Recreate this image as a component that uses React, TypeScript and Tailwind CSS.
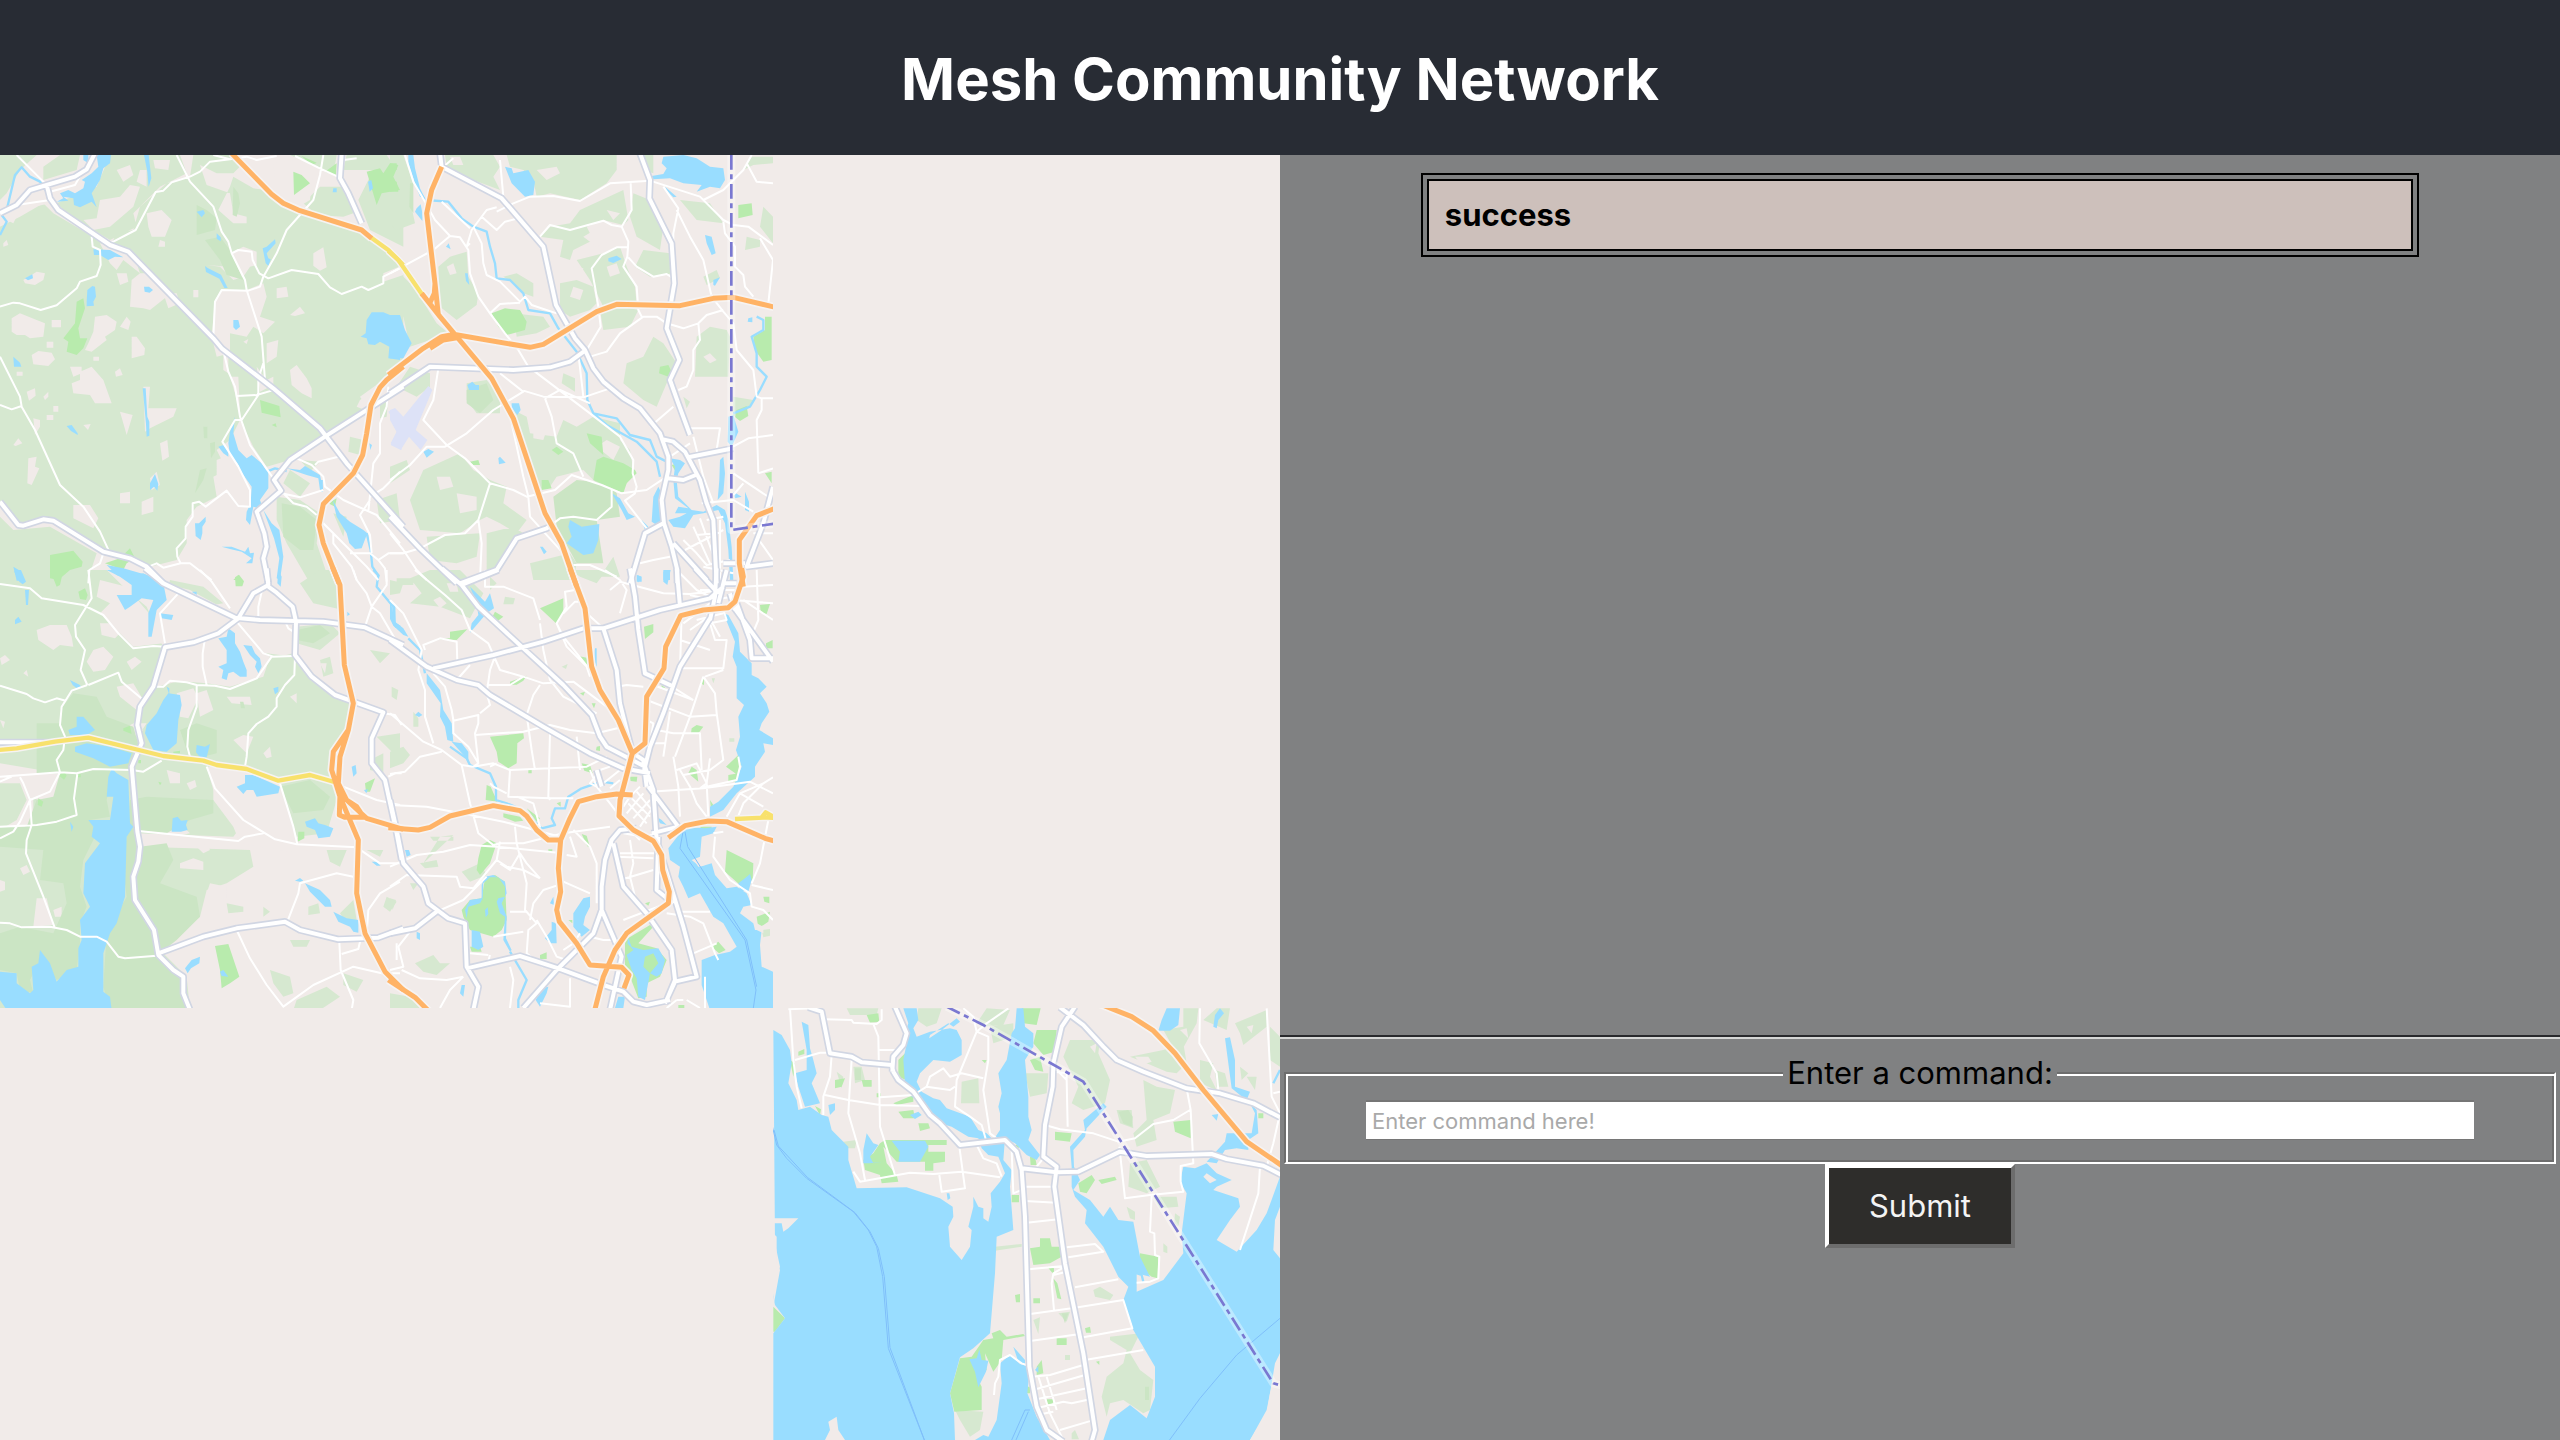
import { useState } from "react";

type Sheet = {
  at: string;
  woods: string;
  clearings: string;
  deepWoods: string;
  parks: string;
  water: string;
  islands?: string;
  streams: string;
  minor: string;
  major: string;
  highway: string;
  toll?: string;
  ferry?: string;
  border?: string;
  airport?: string;
};

/* Every sheet is drawn at three units per pixel. */
const northWest: Sheet = {
  at: "translate(0 150) scale(0.33333)",
  woods:
    "M0 15H110L60 60 20 130 0 150ZM0 230L60 200 130 160 160 190 330 290 350 250 400 240 420 170 500 100 570 80 580 15H700L830 150 900 190 1090 240 1210 330V640L1150 690 1080 740 1100 770 1000 840 970 860 870 930 800 950 760 890 720 810 690 870 650 900 680 960 640 980 650 1040 590 1070 560 1110 560 1180 530 1230 450 1250 300 1200 150 1110 50 1130 0 1050ZM180 15H240L230 60 130 90 130 50ZM330 15H540L560 70 480 110 400 190 410 230 330 270 280 240 200 190 170 160 240 130 290 110ZM0 1100L40 1140 150 1130 290 1210 260 1300H0ZM830 1040L900 1050 960 1090 950 1180 990 1300H930L860 1180 830 1110ZM1050 860L1090 870 1080 915 1045 905ZM1040 15H1160L1210 90V290L1110 240 1075 150 1120 60 1030 60ZM870 15H1010L1000 75 940 45ZM960 110L1040 110 1060 190 1030 200 950 195 910 160ZM1000 1090L1040 1100 1030 1160ZM870 960L930 1000 900 1040 850 1000ZM1130 1050l60 -20 10 80 -60 10ZM900 930l60 5 -30 30ZM1140 760l25 -20 -5 60 -20 5ZM740 830L850 770 950 850 860 920 790 930Z",
  clearings:
    "M600 45L650 70 700 70 745 25 790 60 800 120 760 115 700 80 690 110 655 180 700 220 740 220 740 200 700 190 690 130 620 105ZM820 40L880 30 940 60 930 150 880 180 830 130ZM300 150L360 140 390 105 420 110 400 170 330 230 280 240 250 210 290 205ZM420 60l20 0 0 50 -30 -15ZM350 60l40 -15 10 30 -30 20ZM460 30l50 0 -5 30 -40 -5ZM40 150L130 120 150 160 60 180 40 220 0 200ZM440 190l45 -10 30 30 -20 50 -40 0 -10 -30ZM480 270l15 5 0 15 -20 0ZM300 280L350 290 400 310 420 370 440 370 480 400 540 450 500 440 450 480 430 475 390 470 395 390 420 370 370 330 350 360 330 340ZM70 390L110 365 135 370 130 390 105 405 75 400ZM350 370l30 0 5 25 -25 10ZM580 420h15v22h-15ZM620 345l40 5 40 40 30 -10 20 -30 20 -5 0 -40 -40 -15 -40 20 -5 40ZM665 420L740 420 790 400 800 440 780 500 825 515 790 550 760 530 740 560 690 550 690 610 650 620 635 560 645 450ZM940 310l30 -18 10 60 -20 10 -20 -15ZM830 415l30 -5 5 30 -35 5ZM870 495l30 -25 15 20 -30 8ZM1150 370l60 -25 0 30 -60 20ZM35 505L60 490 110 510 135 520 130 560 90 565 75 555 50 555 35 545ZM155 510h28v22h-28ZM285 500L320 495 350 515 345 540 315 560 320 570 275 605 255 600 265 580 280 545ZM360 530L380 500 392 515 385 540ZM395 560l15 0 25 35 -2 20 -38 10ZM140 575h20v18h-20ZM95 615l20 -12 40 5 10 20 -20 20 -45 -5ZM280 620h17v12h-17ZM210 650l35 0 0 20 -25 10ZM240 665L275 650 310 690 335 760 285 760 270 735 220 730 215 700 240 690ZM345 665l15 -10 8 20 -20 5ZM80 725l25 -10 2 22 -20 15ZM130 740l15 -15 0 15 -10 10ZM140 795h20v15h-20ZM160 768h15v17h-15ZM360 785L398 795 380 855ZM430 710l20 0 -5 65H530L520 800 450 835 435 845ZM250 825l22 -3 -8 18ZM100 805l20 5 0 20 -15 25ZM50 665h18v12h-18ZM40 885l15 -20 12 15 -20 8ZM85 925L110 920 105 950 118 955 95 1005 82 1000ZM480 880l22 -10 5 50 -20 12ZM360 1030l30 -5 0 35 -30 0ZM425 1055l35 -15 0 45 -35 10ZM220 1065l50 0 25 40 -15 30 -60 -30ZM450 985l20 -20 10 40 -25 15ZM870 660l20 -15 30 40 15 30 0 30 -30 -15 -30 -25ZM800 580l35 -10 -5 50 -30 20ZM770 650l30 40 20 -10 0 25 -40 20ZM730 575l15 -8 -5 15ZM670 600l15 0 0 70 -15 -10ZM690 680l25 0 5 110 -15 -60ZM650 930L700 910 760 1060 680 1010 650 1030ZM1080 750l30 -20 -15 50 -25 -10ZM490 430l40 0 10 30 -35 15ZM10 280l10 -10 5 15 -15 5Z",
  deepWoods:
    "M590 165L620 180 650 205 645 240 590 255ZM615 270L660 260 690 300 730 390 680 375 660 330ZM700 110l15 20 5 30 -10 40 -12 -5ZM845 1060L900 1070 950 1110 940 1200 900 1200 850 1160ZM600 960l20 -5 -10 35 -25 40ZM610 830l12 0 0 35 -10 0ZM630 880l15 -5 0 30 -12 20Z",
  parks:
    "M230 455L250 445 255 475 235 535 240 565 262 565 250 595 230 615 200 605 205 575 190 565 225 520ZM780 750L838 768 842 802 785 788ZM815 825l12 -5 3 12ZM880 65L905 75 930 100 882 135ZM1100 65L1140 55 1150 70 1170 40 1195 45 1180 80 1200 120 1145 130 1130 165ZM975 65l35 -25 -2 35ZM905 18l45 20 -15 8ZM150 1215L220 1202 248 1235 245 1250 210 1260 175 1290 150 1285ZM315 1240L360 1225 390 1195 405 1225 380 1240 370 1260ZM700 1290l15 -15 10 15ZM985 1060l25 -15 -5 25Z",
  water:
    "M290 15H333L330 40 310 55 300 90 285 115 275 130 290 172 275 155 240 172 222 165 220 145 190 140 205 152 170 155 190 145 180 130 205 120 225 130 250 115 255 95 245 90 275 70 295 50ZM250 15h15v25l-15 -10ZM432 15h14l8 70 -8 25 -4 -45ZM280 298L330 300 370 322 345 320 325 330 300 315 282 315ZM75 385l22 -12 2 12 -15 6ZM262 420l15 -12 8 2 3 30 -8 15 2 12 -22 2 0 -15ZM432 410l15 0 12 10 -10 8 -15 -3ZM590 185l20 -5 5 10 -10 12ZM650 250l12 12 0 12 -12 -8ZM788 295L800 290 825 268 827 280 800 310 805 325 812 328 805 348 797 340ZM700 510l15 0 5 20 -12 10 -8 -8ZM1082 560L1097 550 1100 510 1115 487 1150 487 1170 495 1200 495V630L1165 625 1168 590 1140 575 1125 585 1105 583 1100 565ZM615 348l8 6 40 20 15 30 5 10 -10 0 -15 -28 -40 -20ZM40 620l20 18 4 12 -22 0ZM428 715h9l5 85 6 15 0 42 -8 3 -2 -38ZM200 828l15 -3 18 25 0 5 -20 -12ZM690 845L705 800 700 850 715 900 740 925 755 915 785 940 805 970 805 1015 780 1050 790 1080 815 1120 838 1140 850 1220 840 1290 830 1285 838 1225 822 1165 790 1080 760 1070 750 1125 738 1110 740 1085 752 1060 755 1010 720 960 712 940 690 915 685 880ZM655 890l15 -5 15 20 0 15 -15 -10ZM450 1000l15 -28 10 30 -3 20 -10 -12 -12 10ZM585 1120l12 0 20 -20 0 15 -10 15 0 20 -5 20 -15 -12ZM665 1190L695 1190 735 1205 745 1190 750 1210 762 1208 757 1240 738 1240 755 1225 725 1205 690 1197ZM860 955L900 960 915 948 960 975 970 1020 960 1020 955 985 920 975ZM998 1050L1020 1090 1050 1115 1090 1140 1102 1150 1085 1195 1065 1197 1048 1180 1040 1150 1010 1100ZM1104 95l10 -5 5 25 -10 10ZM1108 880l8 5 -5 15ZM1000 115l10 0 0 12 -12 0ZM320 1245L370 1255 440 1275 485 1295H400L350 1275ZM40 1250l20 12 15 30H50Z",
  streams:
    "M20 180L45 75 65 52 90 80 120 95 140 125M0 255L20 215 5 195M800 965l25 -10 35 8M965 990l0 35M1100 1150l12 50 5 50 20 30",
  minor:
    "M50 15L105 70 145 110M0 190L50 165 150 150M150 125L225 105 245 70 285 25M530 15L570 95 640 170 665 245 685 275 695 310 735 390 740 420 785 560 795 690M570 80L515 97 490 122 467 126 407 240 330 280M570 80L600 65 630 35 690 28M640 15L690 28 740 20 770 30 830 18M970 15L960 75 940 150 860 240 830 310 790 380 780 410 745 422 665 420 645 455 640 560M695 310l20 -10 40 5 3 25 20 40 27 15 70 -25 80 12 35 40 35 20 60 -22 20 10 45 -20V380L1200 355M885 18l70 35 65 30M0 470L40 458 60 460 122 480 170 466 230 415 240 395 290 378 302 345 300 300 278 290 275 260M0 620L60 740 65 770 105 840 180 1005 250 1070 300 1145 330 1210M0 765L35 778 65 768M670 600L685 665 705 710 720 800 750 885 820 985M790 640L775 685 775 735 725 810 705 810 667 875 715 950 750 1020 750 1070 715 1068 680 1022 617 1070 597 1055 578 1060 578 1100 557 1130 557 1165 530 1195 532 1220 542 1240 490 1253 470 1240 440 1252M710 738L770 735 815 722M542 1240H570L635 1290M890 925L935 945 970 980 975 1010 1030 1050 1130 1095 1200 1180M945 945l10 -10 60 -15M845 1030L900 1042 970 1020M850 1030L880 1060 920 1070 950 1095M1165 710L1160 770 1140 820 1140 910 1120 940 1105 1085M1110 1040L1150 1015 1200 965M1000 1150V1180L1055 1250 1070 1290M970 1120L1050 1200 1100 1250 1135 1290M1050 1210H1110L1135 1230 1165 1210H1210M1110 1050L1080 1095 1110 1155 1115 1210M1135 1230l20 25 5 40M310 1210L300 1240 268 1260 265 1300M1030 30l40 -5",
  major:
    "M0 190L50 165 90 120 140 105 225 80 260 58 285 10M140 105L150 145 175 180 330 285 385 305 640 565 665 595 820 715 960 835 1040 940 1210 1130M1210 710L975 860 870 930 822 990 843 1022 770 1085 793 1150 800 1190 790 1225 805 1300M0 1055L55 1125 70 1127 130 1108 160 1112 310 1205 390 1225 440 1250 490 1300M1025 10L1020 85 1045 130 1085 220",
  highway:
    "M695 10L815 133 850 160 900 182 1085 240 1115 265M1210 650L1160 690 1140 712 1113 765 1100 850 1088 915 1060 970 970 1062 957 1125 970 1180 1017 1300",
  toll: "M1112 262L1165 300 1210 345",
  airport: "M1165 785l20 -10 20 20V900L1172 880 1195 835Z",
};

const northEast: Sheet = {
  at: "translate(390 150) scale(0.33333)",
  woods:
    "M0 15H40L70 100 60 150 75 220 20 240 0 220ZM0 340L60 400 90 440 140 520 170 545 150 560 60 590 40 500 0 490ZM165 15H310L330 50 310 80 330 120 250 90 170 50ZM350 15H680V60L650 100 570 150 480 130 440 140 430 90 400 60 360 50ZM180 320L230 305 235 380 265 430 260 465 200 510 150 470 145 350ZM570 180L700 120 715 210 700 225 640 210 590 230 610 270 550 300 540 330 510 320 520 270 450 260 480 230 540 220ZM560 330L640 310 690 290 710 350 735 410 740 460 640 470 620 430 600 390ZM510 400L560 390 610 410 620 460 600 480 540 500 510 480ZM630 480L700 470 745 480 720 530 640 540ZM790 15H740L760 60 790 70ZM760 300l80 10 10 60 -70 10 -45 -30ZM730 130L780 150 820 230 810 300 740 260 720 200ZM790 560L820 580 860 640 830 700 800 770 760 750 700 700 710 640 760 620ZM920 560L960 530 1010 540 1020 560 1015 680 915 680ZM370 490l90 10 20 30 -40 20 -60 10ZM340 380L380 370 430 400 430 440 400 430 370 400ZM230 700L290 690 330 740 330 790 260 790 230 750ZM370 780L410 800 420 850 500 860 520 810 560 830 610 800 690 820 690 870 720 900 730 960 700 1020 640 1020 580 960 500 980 480 1010 430 1020ZM210 910L250 960 300 990 350 1010 340 1060 410 1110 380 1150 330 1120 290 1100 270 1110 210 1150 90 1140 60 1050 100 960ZM0 950L50 930 60 960 0 1000ZM110 1160L270 1150 260 1220 200 1240 120 1230ZM290 1150L370 1130 400 1150 330 1250 290 1260ZM520 670l35 15 0 40 -40 -25ZM870 150l90 10 40 60 -80 -10ZM940 380l40 -20 10 25 -40 20ZM1060 60l25 -40H1149V40L1090 45ZM1120 170L1149 200V280L1110 230ZM1070 260l40 10 0 20 -45 10ZM1030 740l60 10 -20 30 -40 20ZM420 1240l120 -30 20 30 -10 50H430ZM60 650l60 20 0 40 -40 30 -60 -30ZM880 740l20 15 -10 20ZM670 1220l20 60 -60 0Z",
  clearings:
    "M460 360l30 -10 5 30 -20 10ZM580 260l50 -30 40 10 0 30 -50 20ZM650 350l30 -10 10 30 -30 10ZM170 350l20 -10 10 30 -20 5ZM440 60l60 -10 10 20 -40 20ZM180 20l30 0 10 25 -30 0ZM650 180l40 10 -20 20ZM550 350l30 5 -5 25 -20 -5ZM430 830l40 10 -10 30 -30 -5ZM140 980l40 0 10 30 -40 10ZM620 890l30 -20 40 20 -20 40ZM200 1030l60 10 0 40 -50 10ZM550 410l30 10 -10 30 -30 -10ZM940 620l20 -10 20 20 -20 10Z",
  deepWoods:
    "M230 720L290 700 310 750 270 790 230 760ZM490 1040L560 990 650 1000 680 1030 690 1100 620 1110 640 1240 560 1240 500 1130ZM60 100l10 0 0 90 -12 -20Z",
  parks:
    "M305 490L345 475 390 480 410 515 405 540 350 555 325 530ZM590 850L635 860 640 915 600 880ZM640 920L700 940 735 960 740 970 710 1000 700 1030 610 990 620 930ZM810 650l25 -5 10 20 -10 15 -28 -10ZM1045 165L1085 160 1088 195 1045 205ZM1125 500l20 0V630L1120 635 1095 600 1090 560 1125 540ZM1040 780l30 -12 5 30 -25 15 -15 -12ZM485 900l15 -10 20 15 -15 10ZM240 935l25 -5 5 15 -20 0ZM455 990l20 0 10 25 -30 5ZM845 945l20 -5 -5 30ZM1125 970l20 -5 0 35ZM0 40l20 0 0 20 -20 0ZM0 90l20 5 5 30H0Z",
  water:
    "M0 495L30 495 45 540 65 580 40 625 0 625ZM55 15h15l5 40 15 60 15 30 -15 -5 -15 -40 -20 -60ZM345 50L365 55 370 70 415 60 435 95 430 135 405 140 365 100ZM820 20L880 15 920 25 960 50 1000 55 1005 90 990 115 960 110 920 125 935 105 880 100 840 85 790 88 785 78 820 72 830 55 815 40ZM825 110L860 140 850 142 830 122ZM945 255l20 5 12 50 -12 5 -15 -35ZM655 325l25 -8 15 10 -25 12 -15 -5ZM970 405l0 -15 20 -8 -15 25ZM80 175l12 -12 5 25 0 25 -22 -28ZM168 290l8 -10 6 18ZM225 370l8 0 5 35 -10 -12ZM1075 505l12 -3 0 15 -14 -2ZM232 705l15 -10 10 10 10 0 0 15 -30 0ZM365 760l22 0 5 20 -10 15 -17 -20ZM100 905l15 -8 17 8 -22 18ZM325 925l5 -5 17 18 -20 5ZM1015 800l15 -5 15 50 -20 45 -12 -15ZM990 930l10 -10 5 50 -5 60 -17 20 5 -60ZM805 1010L815 1030 808 1060 815 1110 800 1125 785 1115 790 1040ZM840 925L870 930 885 940 865 970 860 990 865 1040 905 1080 940 1085 980 1065 1005 1080 1015 1110 1025 1190 1030 1290H1020L1015 1200 1005 1120 985 1080 940 1090 910 1095 885 1135 850 1130 835 1110 870 1100 890 1090 855 1090 865 1070 895 1075 855 1045 850 990 855 950ZM1030 1025l25 15 -20 5ZM1065 1025l12 30 0 30 -12 -5ZM665 1030L690 1045 715 1090 735 1100 710 1110 695 1080ZM755 1110l20 20 -10 10ZM540 1110L575 1130 628 1122 625 1170 610 1210 580 1215 530 1180 545 1160 535 1130ZM450 1190l8 0 12 15 -8 8ZM820 1265l20 -5 0 30 -20 0ZM740 1275l15 5 0 15h-15Z",
  streams:
    "M60 20L85 120 105 150 175 155 215 205 250 230 290 245 300 290 315 340 320 385 360 390 400 430 415 480 480 490 505 535 560 605 590 670 592 750 610 790 680 805 720 855 780 870 800 920 830 935M610 790L650 825 740 875 800 935 810 980M1100 500l20 10 0 30 -35 20 15 50 0 40 30 30 -20 40 -30 50 -50 20",
  minor:
    "M45 15L70 95 105 155 135 210 180 258 210 262 235 300 240 370 265 440 300 490 345 550 385 600 415 650 600 790 690 860 730 930 728 970 740 1010 735 1030 705 1052 770 1135M0 370L130 300 180 258M155 155L240 235M340 140L330 30M190 25l-35 30M320 185L370 160 420 140 490 138 570 153 660 100 780 92 930 140 1000 210 1030 225 1075 230 1149 285M240 280L230 290 245 240 290 180 320 172M275 200L320 240 345 215 385 205M250 230L275 280 280 340 290 375 330 395 390 455 405 440 425 465 500 490M300 490L330 462 390 458M450 260L480 225 540 240 640 212 665 225 695 230 725 180 722 100M695 230L715 275 712 320 700 350 740 410 745 480 755 500M715 292H680L635 315 605 355 615 410 625 470 632 530 590 600M715 322L740 350 790 380 830 372 850 385M820 110L865 175 850 250 850 280M860 180L900 260 940 330 965 440 1000 485 1030 520 1040 600 1090 660 1100 740 1115 745 1115 780 1100 810 1105 970M600 620L650 605 690 550 760 500H800L830 520 880 535 925 520 950 495 1000 480M925 520L930 570 910 600 910 660 890 710 865 720M1149 745H1115M850 770L780 830M895 835H990L980 900M1010 900L1075 865 1149 855M1030 970L1149 1050M1105 970L1149 955M1060 1000L1030 1035M1070 40L1100 95 1149 100M940 150L1000 120 1060 60 1085 15M1000 215L1005 250 1035 290V350L1060 375 1065 410 1090 440M1110 265L1149 330 1135 460M145 655L130 750 100 810 170 885 225 925 300 1000 370 1020 410 1040 495 1020 545 975 635 1005 695 1030 770 1020 830 980M0 990L60 945 110 890H165L230 850 310 780 400 725 330 670M400 722L460 740 580 742 660 715M465 745L510 720 600 760M465 745L485 800 500 880 550 910 580 980M565 610L580 740M300 1000L265 1110 225 1150 165 1155 90 1195M265 1110L275 1180 270 1290M365 820L400 980 415 1040 420 1100 520 1210 550 1290M550 1245H600L680 1280M665 1020V1070L620 1110 550 1100 510 1105 490 1120M0 1210H40L90 1195M0 1150L40 1200 80 1260 110 1290M840 920L900 880M910 860L940 980 970 1060M935 1060L1030 1050 1090 1085M885 1200L1000 1140M880 1170L920 1210 950 1245 1020 1230M910 1130L960 1240M930 1105L975 1230M950 1110L1000 1100M920 1155L980 1150M940 1250L1030 1270M990 1110V1290M1149 1150L1090 1150M1100 1160L1149 1230M840 1220L790 1230 750 1240",
  major:
    "M150 10L155 50 335 145 460 290 498 465 555 565 585 600 610 655 640 695 700 745 750 775 810 850 835 920 835 960 815 1050 822 1120 845 1190 862 1260V1300M750 10L780 90 778 145 845 280 853 400 830 535 868 630 840 690 865 760 900 855M0 730L120 650 370 660 480 652 540 635 585 602M820 868L850 875 885 905 930 990 950 1060 970 1110 980 1300M895 922L1030 895M835 985L880 990 925 972M820 1120L765 1150 720 1300M0 1100L90 1195 200 1300M490 1120L470 1135 380 1165 320 1260 210 1300M850 1180L950 1290M1149 1010L1120 1120 1070 1250 1149 1240M1065 1240H1000",
  highway:
    "M155 50L125 120 110 190 135 400 145 495M95 430L150 500 305 685 370 805 465 1090 515 1180 560 1310M-5 675L100 595 155 560 190 553 420 592 460 583 620 485 680 463 870 467 970 445 1030 442 1160 473M120 595L160 570 210 562M135 400L133 430 118 462M1160 1073L1100 1097 1048 1170 1048 1240 1060 1310",
  toll: "M-5 303L25 330 98 436",
  airport:
    "M0 780l15 -5 25 25 75 -92 12 12 -50 120 35 30 -20 30 -35 -40 -25 40 -30 -15 20 -35 -22 -40Z",
  border: "M1024 15V1140L1160 1120",
};

const southWest: Sheet = {
  at: "translate(0 570) scale(0.33333)",
  woods:
    "M0 0H320L380 60 440 110 480 200 490 240 460 340 470 350 550 330 640 340 740 330 800 250 880 260 950 320 1010 380 1050 390 1060 450 1000 540 990 620 840 640 740 600 620 590 640 660 730 760 700 800 410 790 420 830 750 840 760 890 680 940 620 960 600 1040 480 1140 560 1220 570 1320H0ZM510 30l100 20 60 50 -60 10 -110 -30ZM890 170L990 160 1020 190 960 240 890 220ZM800 270L880 250 930 320 1010 380 960 600 900 600 740 580 750 490 820 430 830 380ZM840 640L940 620 1000 640 1010 690 980 790 890 800 870 730ZM900 40l60 -40 50 0 20 120 -90 -20ZM1110 570l40 -20 0 60 -40 -10ZM790 1010l20 15 -20 15ZM680 1000l50 10 0 15 -45 5ZM925 1010l30 -10 5 30 -35 5ZM1020 1030l40 -40 10 60 -30 10ZM1160 980l30 15 -20 30 -20 -15ZM810 1200L870 1220 880 1270 850 1280 820 1240ZM1030 1210l60 20 -20 35 -40 -20ZM1130 500l70 -10 0 80ZM890 1290L980 1250 1020 1280 960 1320H880ZM870 1110l60 0 -10 20 -40 0ZM980 840l60 0 -20 50 -30 -15ZM1110 240l60 10 -30 30ZM960 270l30 -10 10 50 -30 10ZM1100 840l40 20 10 -20Z",
  clearings:
    "M300 30L380 50 430 110 500 190 490 220 400 230 340 170 300 130 330 100 290 80ZM110 180L150 165 200 165 215 200 220 230 180 225 160 240 115 210ZM300 160l30 0 30 30 -15 15 -40 -10ZM280 240l30 -10 30 30 -25 40 -35 5 -20 -30ZM380 275l25 -15 20 15 -30 25ZM0 265l15 -10 15 15 -25 15ZM70 310l10 -10 5 20ZM0 450l15 5 -5 20ZM490 40l80 20 110 60 20 30 -80 60 -110 10ZM500 250L640 200 700 160 780 240 810 260 790 320 690 350 620 340 500 330 480 300ZM350 350L400 340 430 390 410 420 360 380ZM380 470l30 -15 20 25 -20 20 -40 -10ZM530 370l50 -15 15 30 -30 60 -25 -5ZM590 370l30 -10 20 60 -40 20ZM680 380l70 0 5 25 -60 -5ZM700 510l30 -15 30 5 -20 50 -20 -20ZM500 600l40 10 0 30 -30 0ZM560 640l25 -10 5 20 -20 10ZM0 580L120 600 190 600 220 630 220 660 170 680 120 690 80 680 60 640 0 640ZM60 640L100 690 100 760 50 780 30 800 0 810V780L50 750 80 690ZM180 640l40 0 0 20 -40 5ZM100 780l20 0 15 30 -20 0ZM60 895l20 -10 10 20 -20 10ZM0 930l15 5 0 25 -15 5ZM110 985h30l20 80 -60 5ZM160 1020l25 -10 0 30 -20 0ZM540 880l40 -15 30 10 0 25 -70 -5ZM590 830l30 -10 10 20 -20 10ZM480 790l70 -20 20 20 -70 15ZM630 940l50 10 0 40 -60 -20ZM380 1150l60 -40 40 40 -40 30ZM640 650L740 770 880 800 980 820 900 850 720 820 700 770 640 690ZM790 550l20 -20 5 30 -15 5ZM440 460l-30 0 10 30ZM870 380l20 -10 0 30ZM960 280l20 0 -5 30ZM930 690l20 0 0 20 -20 0ZM700 600l20 0 10 25 -20 5Z",
  deepWoods:
    "M110 460L180 460 180 420 220 370 290 380 320 440 400 470 420 540 390 600 330 600 330 640 320 690 330 740 270 750 290 790 250 870 240 950 260 1010 240 1060 240 1120 230 1200 170 1230 120 1170 90 1230 100 1270 60 1260 50 1210 0 1200V1090L60 1070 160 1090 200 1000 190 940 120 930 130 840 0 830V770L80 770 110 690 160 680 180 610 110 610 110 500ZM390 690L440 680 640 690 640 730 570 750 500 790 410 780 420 830 500 820 520 870 480 940 590 980 600 1040 530 1110 480 1150 550 1220 560 1320H330L310 1250 320 1090 380 980 370 900ZM540 480L590 460 650 480 650 550 570 570ZM840 650l90 -20 60 50 -20 40 -90 10ZM890 180L960 165 990 190 940 220 890 210ZM720 395l10 0 5 20 -12 0Z",
  parks:
    "M235 65l20 -10 8 20 -5 15 -18 -3ZM150 0h40l-10 45 -10 5ZM705 22l12 -8 15 20 -5 15 -20 0ZM370 475l20 -8 5 25 -25 -10ZM520 545l20 -3 0 8 -20 0ZM645 1128L685 1122 718 1220 690 1240 665 1255 660 1200ZM115 685l15 10 -5 15 -12 -5ZM895 785l18 0 0 20 -20 10ZM1095 640l30 -15 -15 40 -12 0ZM175 615l20 -8 5 10 -8 12ZM230 612l12 0 0 10 -10 0ZM475 635l10 3 -5 8ZM415 570l8 0 0 10 -8 0Z",
  water:
    "M320 0L370 0 400 15 430 10 490 40 500 90 470 120 455 200 445 200 445 130 460 90 425 85 390 110 375 120 350 75 395 75 395 45 360 20ZM480 130l40 5 -5 15 -30 -5ZM45 0h18l15 35 -10 8 -10 -8 -15 -30ZM75 60l12 0 -3 45 -6 0ZM45 150l10 -10 10 15 -20 8ZM655 205L680 200 685 175 705 190 705 220 720 245 730 275 740 300 740 320 720 320 700 305 685 310 680 330 665 325 670 300 655 290 680 280 680 240ZM730 225L755 228 765 250 780 265 785 290 775 310 765 290 770 275 750 255ZM505 370L540 375 545 405 535 450 530 520 500 545 460 540 435 490 440 465 470 430 490 390ZM820 355l15 -5 0 15 -10 8ZM205 480L230 470 230 440 250 440 285 480 260 495 210 495ZM210 330l30 15 5 10 -15 0 -12 -10ZM225 530L260 520 330 530 395 550 385 580 330 590 280 565 225 545ZM590 525l25 5 15 -8 -10 40 -20 0 -12 -15ZM335 595L350 610 385 630 390 760 400 770 380 800 375 980 350 1060 330 1090 310 1150 310 1265 330 1280 335 1320H20L0 1290V1205L50 1210 50 1240 90 1270 100 1260 95 1190 115 1180 120 1140 150 1180 170 1235 200 1200 235 1190 235 1135 245 1110 240 1050 270 1010 250 970 255 880 300 820 275 800 280 770 265 750 330 750 340 680 320 680 325 620ZM210 755l10 15 -5 15ZM518 745l15 -5 10 12 20 -2 -5 15 5 15 -20 5 -28 0ZM710 650L735 640 735 615 760 615 840 650 835 670 770 680 760 660 740 660 730 672ZM1055 590l12 -5 3 25 -10 10ZM915 755L945 745 955 760 975 765 1000 775 990 800 955 805 945 780 920 770ZM1115 875l15 0 12 12 -12 0ZM885 932l15 -8 10 8 -10 3ZM915 940L960 960 990 990 995 1010 975 1010 930 965ZM1000 1025L1040 1045 1075 1050 1075 1088 1060 1085 1050 1070 1015 1055ZM555 1195l20 -25 25 -10 -2 20 -25 15 -10 15ZM660 1205l10 -5 15 20 -20 -2ZM835 0l10 20 -3 30 -10 -10ZM1092 660l12 -2 -5 12ZM500 350l8 5 0 20ZM1178 100l8 5 2 70 -8 -10ZM1042 125l8 8 -8 5ZM575 65l15 0 0 10Z",
  streams: "M1120 0L1135 15 1130 50 1180 110 1182 160 1200 170",
  minor:
    "M0 42L90 55 125 85 250 105 310 135 355 190 400 235 460 228 495 230M265 0L275 85 225 165 228 200 255 240 242 300 262 345M0 347L80 372 100 385 135 397 170 385 197 392M265 345L355 308 365 335 430 390M262 345L215 362 185 410 180 465 195 500 190 540 170 570 180 607M0 620L180 607 230 610 280 597 395 600 430 605 485 572M0 635l35 -15M180 607L150 665 90 690 95 765 80 810 78 850 130 980 165 1075M0 770L110 765 170 755 230 735 222 685 232 612M0 805L40 785 60 755 90 690 70 640 60 622M0 1058L30 1060 65 1072 150 1070 200 1080 240 1100H290L320 1115 355 1160 375 1165 470 1157M460 350H490L510 332 560 337 590 345 645 347 690 357 770 325 815 260 880 258M615 205L608 250 608 290 620 345M590 347L590 410 565 480 562 530 570 560M535 70L480 130 495 220M775 148L775 110 785 65M600 0L635 35 690 115M710 155L765 220 790 250 820 260M858 160L865 175 885 188M885 260L883 315 855 345 830 385 830 410 805 440 770 462 745 490 740 560 735 590M620 590L645 655 730 750 825 808 890 823 1070 832 1140 880 1200 880M415 783L715 813 735 800 790 790M840 640L880 770 892 823M1060 920L1010 910 900 940 895 970 860 1060M1060 0L1070 30 1100 70 1115 110 1095 170M1160 0V45L1115 110 1140 130 1190 215M1030 650L1130 690 1200 705M1150 430l35 5 20 30M1165 620l20 -10h20M710 1080L750 1165 800 1245 850 1310 940 1245 1060 1190 1145 1210H1200M1018 1115L1022 1200 1060 1290 1055 1320M1080 1115l-5 22 -50 15M1200 935L1140 970 1105 1020 1100 1090M1190 1120v20l-0 30",
  major:
    "M435 -5L490 40 705 143 780 150 970 155 1095 172 1210 225M800 -5L805 45 760 70 715 145 655 190 580 217 495 232 460 350 420 410 412 465 425 520 395 590 412 785 420 830 415 875 400 920 405 990 462 1080 475 1155 520 1200 550 1220 550 1270 570 1320M805 50L830 68 878 110 888 155 885 255 935 320 1005 375 1150 427 1115 505 1115 580 1155 630 1190 790 1205 870M475 1150L610 1100 710 1075 855 1055 900 1080 1015 1108 1135 1103 1210 1075M0 517H170",
  highway:
    "M997 -10L1020 45 1033 285 1060 400 1045 480 1000 545 995 600 1020 680 1075 810 1070 970 1095 1090 1155 1205 1210 1260M1045 480L1020 560 1015 640 1040 690 1100 745 1210 778M1020 670L1018 735 1035 742 1100 742M1040 690l30 20 20 30",
  toll: "M-5 540L50 535 165 515 265 503 490 558 610 572 650 585 740 597 835 632 930 615 1003 636",
};

const southEast: Sheet = {
  at: "translate(390 570) scale(0.33333)",
  woods:
    "M60 25L120 0H210L280 70 240 145 150 110 60 100 95 70ZM540 0H650L620 40 570 20ZM0 30l40 10 -10 30 -30 5ZM300 20l20 20 -20 20ZM345 80l30 5 -5 18 -30 0ZM0 545L40 530 60 555 40 580 0 595ZM5 350l20 10 -5 30 -15 -10ZM70 425l15 20 0 25 -15 0ZM100 880L190 795 150 800ZM90 880l50 -10 5 20 -40 5ZM215 905L270 880 290 915 240 935ZM75 1180L130 1155 150 1180 180 1180 140 1215 100 1205ZM0 1270L60 1280 90 1314H0ZM0 985l18 5 -10 30ZM1115 1080l25 -3 0 20 -20 5ZM515 290l18 -8 -5 15ZM20 25h50v20H20ZM120 800h70v12h-60ZM1018 505h15v10h-15ZM965 325h10l-5 15ZM60 940l25 0 -15 20Z",
  clearings: "M130 90l20 -10 20 20 -20 15ZM170 40l30 0 5 25 -25 0Z",
  deepWoods: "",
  parks:
    "M300 500L400 490 402 505 382 520 380 580 355 595 325 575 320 545ZM450 115L520 85 520 130 498 160ZM145 208L180 205 180 185 232 178 200 210ZM315 125l25 15 -20 15 -15 -10ZM360 335l50 -18 -10 15 -20 12 -20 0ZM565 258l25 5 5 30ZM762 170l28 -8 0 25 -25 20ZM1110 105l30 -3 -10 30 -18 -5ZM1128 220l20 -10 0 25 -20 0ZM905 475l15 -10 20 5 -15 20 -22 0ZM1045 555l8 30 -10 30 -35 -25ZM905 590l15 10 5 35 -30 -25ZM1015 615l30 -5 -5 25 -25 0ZM575 580l25 5 8 25 -25 -8ZM290 645l12 5 20 45 -35 -5ZM340 730L390 740 400 752 375 755 340 742ZM275 825L300 810 320 820 300 880 270 915 260 900 265 865ZM285 925L315 915 345 935 350 1050 335 1080 310 1100 240 1080 220 1040 215 1020 240 990 275 985ZM575 792l15 5 10 35 -8 -3ZM1010 840L1090 880 1088 930 1050 945 1005 905ZM960 690l10 15 -5 30ZM1100 1040l40 -15 -5 30 -30 20ZM705 1110L780 1065 790 1070 745 1120 800 1135 830 1170 810 1220 770 1240 770 1280 745 1285 720 1220 705 1200ZM965 1130l20 -15 22 25 -20 10ZM450 1155l20 -8 0 20 -20 0ZM475 838l12 0 0 10 -12 0ZM1120 980l18 0 0 20 -15 -5ZM240 1130l30 0 5 15 -30 0ZM605 400l12 0 -5 15ZM620 530l10 -2 0 15 -12 -2ZM720 620l22 0 -2 15 -18 -2ZM570 370l15 -5 -5 12ZM930 340l12 -15 0 20ZM500 700l12 -5 0 15ZM415 598l10 0 0 12 -10 0ZM815 345l12 10 -12 3ZM765 1000l15 -5 -5 12ZM410 715l40 30 -10 10ZM535 1050l12 0 0 10ZM865 1305h18v9h-18ZM930 770h35v8h-30Z",
  water:
    "M240 50L285 95 300 70 312 115 290 130 240 188 245 160 265 135 260 100ZM0 85l15 70 25 20 15 25 -15 -5 -30 -28 -10 -20ZM820 0h22l-10 45 -12 -10ZM742 15l12 5 -10 18ZM1000 130L1015 135 1045 190 1050 245 1085 280 1085 315 1105 325 1130 350 1110 370 1130 400 1138 425 1115 460 1108 480 1149 505V525L1120 520 1125 545 1095 590 1095 620 1040 670 1000 720 960 740 960 710 985 695 1030 650 1055 590 1038 540 1050 500 1045 440 1062 405 1040 385 1040 290 1028 260 1035 215ZM110 310L150 360 160 420 185 460 190 515 172 510 165 470 150 440 152 400 110 340ZM185 515L215 520 235 545 235 580 225 560ZM75 435l10 -10 12 10 -10 6ZM45 840l12 0 5 15 -12 5ZM615 235l5 0 0 55 -8 -20ZM835 835L870 790 890 770 945 775 980 770 970 790 935 800 930 860 905 870 930 890 965 880 975 915 1010 955 1040 950 1070 970 1085 1005 1060 1010 1050 1030 1090 1060 1095 1080 1115 1080 1110 1125 1115 1190 1149 1205V1320H960L935 1245 935 1170 975 1155 1020 1145 1040 1130 1000 1060 970 1040 930 970 895 985 880 950 865 920 870 890 840 870ZM1045 940L1065 925 1080 912 1085 930 1075 965 1050 960ZM800 740l15 10 15 15 -20 -5ZM275 985L240 990 225 1020 230 1045 235 1010 270 1000 278 985 280 940 300 922 325 922 345 950 345 980 325 985 320 995 330 1030 345 1040 340 1110 360 1145 365 1140 348 1105 350 1040 335 1000 350 970 345 935 310 915 285 920 275 945ZM245 1080L270 1085 280 1130 265 1140 245 1130ZM285 1020l8 -8 2 20 -8 10ZM580 985L600 980 600 1010 585 1040 580 1065 600 1080 575 1100 550 1070 550 1030ZM480 1000l10 -20 2 25ZM465 1105L485 1080 485 1055 498 1060 500 1120 480 1120ZM455 1255L475 1250 470 1270 450 1310 437 1290ZM215 1245l10 0 -5 35 -10 -10ZM80 1085l10 5 0 20 -10 -5ZM715 1105L725 1130 760 1140 805 1135 825 1170 815 1210 800 1220 780 1210 805 1180 790 1150 765 1160 760 1190 780 1210 765 1290 745 1280 740 1225 725 1200 710 1155 730 1140 712 1120ZM685 1280l20 0 -5 34H675Z",
  islands: "M1100 1060l20 10 0 20 -20 -10ZM930 865l-15 10 10 15 20 -5Z",
  streams:
    "M55 205L90 240 105 310M180 530L230 565 240 585 300 610 318 650 318 690 350 700 400 720 455 775 495 765 485 745 495 715 525 715 535 680 575 655M575 655L635 635 670 640M360 1145L410 1230 385 1290 385 1314",
  minor:
    "M0 90L40 130 95 240 85 300 105 360 105 440 130 520M75 0L165 75 215 120 240 180 295 220 330 300 400 320 460 340 550 335 690 440 715 480M130 310L165 350 185 420 190 450 190 490 235 530 265 580M0 430L100 515 155 540 215 585 250 590 310 580 360 600 480 595 590 590 650 560M155 545L90 560 45 605 0 612M215 585L240 700 265 790 310 825 330 820 400 820 520 790 660 770M250 590L265 580 255 490 265 460 265 435 190 452M255 495L400 485 480 465 540 480 620 490 700 470M270 430L300 405 290 370 300 300 320 245M105 240L100 225 150 205 200 215 202 275M240 285L200 330M450 160L460 240 480 330 520 380 620 430M285 0V50L340 50 430 85 450 150M500 160L520 200 600 300M555 60L525 65 530 110 500 160 530 230 590 290 600 320M290 345H360L400 320M450 345L430 375 410 435 425 540 435 600M360 600L355 680 480 685 550 685M300 640L310 650 350 670M520 130l35 -35 25 0M560 500L570 600M480 490L475 680 480 690M645 0L690 30 710 60 690 130M660 60L690 35 820 70 900 72 1000 60M735 55L740 120M590 130L640 175M1149 670L1080 635 940 655 860 660 780 665M1149 622L1120 640 1060 700 1040 750M860 600L920 580 950 640 955 740M850 560L865 650 870 740M870 600L900 650 920 700 950 740M825 520L780 520 790 460 770 450M960 565L950 640 930 655M1045 560L1050 590 1040 630 930 655M940 320L975 370 980 430 1000 570 960 600 880 615M770 390L900 440 980 435M940 320L900 440 855 560M870 295L1000 295 1010 210 975 210 960 160 1010 150 980 60M945 320L1000 300M870 210L960 240M875 130L870 300M800 480L850 490 930 490 935 600M840 425L820 560M680 350L710 345 760 350M830 340L910 390M800 320L850 340M790 345L910 390M0 705L110 710 240 735 340 755 510 800M400 740L450 770 430 700 380 680M0 890L80 855 160 845 240 825 320 830 420 840 520 850M0 950L50 915 200 920 210 950 250 955 320 870 330 815M320 870L350 890 400 900 450 925M330 880L360 900 390 850 410 880 450 925M375 770L380 820 400 900 410 940 405 1020 440 1060 415 1080 410 1150 460 1190M360 1025H410M440 1050L470 1100 500 1160 530 1170M520 940L460 960 430 1000 420 1050M520 935L600 970M310 1100L400 1085M140 1025L220 990 290 920M295 1155L240 1150M0 1200L40 1190 25 1130 60 1085M35 1200L90 1225 170 1230 220 1220M220 1220L180 1260 150 1314M300 1155L290 1190M360 1190L370 1230 360 1314M540 1225V1310L450 1300M540 800L560 860 530 855M550 780L600 830 620 880V1000M690 850L820 850M680 860L790 865M720 810L730 880 720 920 740 1000M690 930L790 900M700 1050L830 1000M830 1030L900 1040 940 1060 975 1150 985 1170M870 1025L960 1025M910 1150L980 1120M520 1140l30 -20 20 -30M600 1100l40 10 40 0M860 1290L830 1314M890 1290L930 1314M860 1290H880M945 1220L945 1314M970 790L1000 785M975 800L970 860 1020 930 1080 970 1085 1010 1120 1020 1149 1050M1085 945L1149 960M1085 940L1110 880 1135 750M1050 670L1120 710M1010 740L1050 670 1120 640M600 600L620 650 660 700 690 740M620 650L600 640 630 600 660 590M640 640L690 600M660 655L690 630M720 680L780 740M740 665L790 725M715 700L770 760M750 650L720 680 700 710M760 670L710 730M780 690L730 745M790 710L750 770M700 790L760 800 840 780M720 780l30 30M1149 45L1060 50 1010 30 960 60M1149 100L1030 90M1060 90L1149 150M1100 0L1105 150 1080 210M920 150L1000 130M880 160L960 100M900 180L970 130M860 0L920 60 980 90M900 75L960 90 1030 80M930 60L1040 60M940 110L990 200M300 590l20 -10",
  major:
    "M155 -5L215 45 265 110 400 235 520 345 605 435 630 500 650 530 765 590M0 210L110 290 200 330 265 345 300 375 460 470 600 550 700 595 780 610M130 295L310 255 460 215 580 175 640 175 810 120 960 85 1000 50M215 45L325 0M640 175L680 300 690 400 725 540M720 -5L735 80 745 180 765 310 850 350M960 145L870 290 820 430 780 530 765 590 790 660 800 810 880 1070 920 1220 855 1235 825 1300M775 650L865 770M865 770L785 790M860 -5L870 110M0 690L20 780 40 880 100 950 115 1000 175 1045 225 1060 230 1190 265 1250 250 1320M0 1090L75 1075 140 1025M230 1195L390 1158 505 1195 640 1245 700 1265 730 1295 770 1305 840 1290M400 1314L500 1200 610 1090 635 1020 635 950 645 870 665 810 690 780 740 775M670 820L700 950 770 1030 845 1140 855 1230 830 1290M635 1020L695 1160 660 1320M620 600l15 50M730 550L760 570 770 650M805 800L800 960 850 1000M980 -5L975 80 960 150M915 -5L985 70M1030 110L1149 275M1040 100L1080 210 1085 265H1149M1010 0L985 100M1020 70L1035 120M1000 40H1040",
  highway:
    "M1055 -5L1060 20 1035 95 1015 113 940 120 872 137 827 230 822 295 770 380 765 520 727 550 685 450 630 360 605 290 585 115 540 -5M727 550L690 690 687 738 730 780 790 813 815 855 818 900 838 965 835 1000 710 1090 675 1140 640 1220 613 1325M-5 773L85 780 120 772 180 738 310 707 390 722 410 738 440 780 475 810H512M728 675L680 672 620 680 565 695 540 745 512 810 505 895 512 965 500 1020 508 1055 560 1120 600 1185 695 1192 717 1215 702 1255M-5 1230L75 1282 115 1322M835 803L885 767 955 753 1010 755 1125 805 1160 815",
  toll: "M1035 747L1120 743M1115 742l12 -15 30 17ZM1115 743H1160",
  ferry: "M880 780L870 835 1065 1110 1098 1260 1090 1314M885 785L893 830 1070 1110 1100 1250",
};

const southBay: Sheet = {
  at: "translate(770 1000) scale(0.33333)",
  woods:
    "M230 25H325L320 45 240 45ZM620 70L650 25 720 30 700 75 640 80ZM880 170L900 120 990 120 985 160 1020 240 1005 310 940 330 905 310 925 260ZM1080 170L1180 150 1240 130 1250 190 1220 220 1190 215 1130 190ZM1120 240L1160 260 1215 270 1200 340 1150 360 1160 420 1100 440 1090 400 1130 360ZM1240 25H1285L1280 70 1225 170 1180 90 1240 80ZM1300 60L1340 25H1380L1370 90ZM1395 70L1490 30V80L1420 135 1410 100ZM1500 80L1530 110V200L1500 180ZM1080 490L1130 480 1170 560 1130 580 1075 560ZM1150 590L1220 590 1225 620 1170 625ZM970 870L990 860 1030 885 1020 900 975 890ZM1020 1010L1110 1000 1080 1060 1110 1110 1150 1140 1140 1230 1120 1240 1060 1200 1020 1210 1010 1250 995 1190 1010 1130 1060 1090 1070 1050 1020 1020ZM1070 620l25 15 0 25 -15 -5ZM1215 640l15 10 -5 30 -12 -10ZM575 245L625 235 628 310 573 310ZM1040 330L1085 330 1090 385 1050 370ZM555 1230L640 1235 630 1290 600 1310 570 1260ZM1470 1280L1530 1270V1300L1490 1300ZM1290 180L1330 190 1320 230 1340 270 1290 250ZM1335 210l30 10 10 40 -35 0ZM180 1290l15 -35 20 64h-35ZM905 1300l10 -10 12 28h-22ZM1430 230l30 0 -5 40ZM1180 730l12 10 0 20 -12 -5ZM675 740l80 -8 0 8 -80 12ZM445 25H515L500 70 470 80 440 60ZM1410 200l25 20 -20 20ZM220 425l40 -5 -5 25 -25 0ZM250 200l25 0 10 40 -30 10ZM660 80l70 -10 0 40 -60 20ZM200 215l20 15 -5 35ZM885 1065h15v15h-15ZM865 940l35 -5 -10 30ZM790 960l20 -8 -5 50ZM765 220l70 0 -5 60 -50 10Z",
  clearings: "M1095 170l40 0 10 15 -30 10ZM960 140l20 -10 -5 30ZM1230 90l20 -5 5 30ZM1430 80l20 -5 -5 25Z",
  deepWoods:
    "M1045 335L1075 330 1088 350 1085 380 1060 370ZM1125 1160h12v40h-12ZM255 205h18v35h-18ZM875 940h20l-10 30Z",
  parks:
    "M755 25H812L800 75 760 70ZM800 90L860 90 855 155 820 165 790 130ZM290 45L325 40 328 65 300 68ZM430 115l10 -3 5 20 -15 5ZM385 180L415 150 408 240 385 230ZM60 180l15 10 -5 40ZM85 155l18 -8 0 15 -18 5ZM275 240h30v20h-25ZM370 310l60 -25 0 20 -50 10ZM385 335L430 330 435 355 400 355ZM445 370l30 0 5 15 -30 8ZM280 480L310 460 330 430 345 420H530V435L475 435 475 455 525 455V485L490 490 490 512H465V485H380L340 440 350 490 380 525 385 545 335 550 330 525 285 510ZM855 395L905 400 900 425 855 420ZM1210 365L1262 360V415L1215 395ZM925 550L965 525 975 540 950 580 930 575ZM985 540l50 -10 5 10 -45 12ZM725 585h22v22h-22ZM780 745L810 740 810 715 840 715 845 740 872 740 875 770 840 790 790 795ZM735 885l15 -3 0 25 -12 0ZM790 895h20v15h-20ZM832 800l20 5 0 20ZM850 835l12 15 12 48 -12 -3ZM860 1015h30v20h-30ZM945 985l15 -5 3 18 -15 0ZM665 1000L690 990 710 1010 760 1002 765 1008 700 1020 695 1080 670 1115 645 1060 650 1110 620 1130 635 1160 635 1230 553 1235 540 1180 570 1075 605 1070 640 1020 670 1015ZM10 920L45 955 15 995H10ZM1110 760L1165 770 1163 835 1145 830 1105 800ZM55 660l35 -5 -20 20ZM830 1198l20 0 -2 15 -20 0ZM635 180l15 0 -5 10ZM780 470l15 0 5 25 -18 0ZM735 435l15 0 -5 10ZM1465 340h15v15h-15ZM978 1085l10 -2 0 12ZM800 1100l15 -20 5 40 -20 5ZM780 180l30 -10 10 45 -25 -5ZM1270 535l60 30 -5 5 -50 -18ZM195 240l30 -5 -10 25 -20 5ZM770 1160h10v20h-10ZM135 318l18 10 -3 18ZM320 280h12v12h-12Z",
  water:
    "M10 90L35 105 60 150 65 190 55 250 80 300 85 330 120 320 155 345 175 350 185 390 235 440 235 480 260 565 410 562 510 595 548 620 550 650 535 680 540 740 575 780 600 740 605 690 595 680 610 620 610 590 625 620 640 625 640 655 655 665 665 620 662 580 690 545 705 520 685 470 655 465 635 445 625 415 595 410 545 380 510 370 480 355 440 300 425 290 405 250 400 180 410 130 405 100 415 70 400 25H440L445 60 430 85 440 110 480 95 540 85 560 90 575 120 575 165 540 185 490 180 450 220 440 245 455 275 490 295 510 300 530 325 600 350 625 390 650 400 670 420 690 390 690 340 685 320 695 280 685 220 710 180 725 100 735 85 740 25H760L765 80 790 100 790 140 765 180 775 290 775 350 785 390 775 420 810 465 800 480 770 465 735 430 705 415 700 480 725 510 720 560 730 690 680 710 675 820 660 1000 610 1045 570 1072 540 1180 552 1240 555 1320H10V1000L45 955 15 915 10 890 30 800 15 730ZM598 1078L620 1075 628 1048 635 1080 655 1082 648 1115 625 1162 615 1115ZM615 1320L640 1305 655 1310 680 1260 695 1150 690 1090 720 1065 750 1092 780 1100 772 1180 800 1250 840 1320ZM905 500L900 440 945 390 940 360 1000 310 1010 320 950 385 945 410 910 450 912 500 930 540 910 570 960 600 1000 650 1020 620 1045 660 1090 665 1110 770 1140 830 1100 820 1100 875 1180 840 1240 760 1235 700 1250 580 1230 545 1240 500 1275 505 1310 490 1340 520 1385 540 1340 560 1330 570 1405 595 1410 620 1380 660 1340 720 1400 755 1460 690 1490 640 1530 530V620L1515 660 1510 750 1530 775V1060L1500 1180 1490 1240 1440 1320H1000L1020 1260 1080 1215 1130 1255 1155 1190 1155 1100 1090 990 1060 900 1075 860 1045 830 1000 740 945 670 950 630 915 590 905 560ZM1175 60L1190 25H1230L1225 75 1200 92 1165 92ZM1365 115L1380 112 1395 180 1395 260 1440 275 1430 300 1460 330 1465 400 1435 420 1435 450 1400 445 1365 450 1340 490 1310 485 1365 425 1370 400 1400 400 1445 400 1455 340 1440 310 1385 265ZM1350 25L1362 40 1345 60 1340 85 1330 80 1335 45ZM95 65L115 75 120 145 130 180 140 220 125 250 150 310 105 320 85 260 75 220 110 210 110 150ZM175 315l20 -5 0 20 -15 15ZM290 400L310 430 325 435 300 470 310 490 340 485 300 490 280 490 280 450ZM365 422L465 422 475 440 450 485 385 485 390 455ZM515 90L560 55 570 65 550 80 535 70 480 105 470 145 460 150 470 120ZM420 345l25 -10 10 10 -20 12ZM530 580l8 0 3 15 -8 5ZM1325 345l20 -3 -5 20ZM730 1040l35 40 0 15 -20 -10ZM795 1110l10 -12 0 20Z",
  islands:
    "M10 655L85 655 55 685 40 695 35 670 10 670ZM175 1265L200 1250 205 1290 225 1320H165L180 1290ZM1300 530l10 -10 30 20 -20 10ZM10 700l10 10 0 80 10 20 -20 110ZM1530 1060L1515 1090 1500 1180 1490 1230 1440 1320H1530Z",
  streams: "M1530 210L1510 250M1085 815l30 10 5 20",
  minor:
    "M60 25L70 180 80 260 95 325M130 25L55 28M75 180L150 158 185 158M185 165L180 230 160 290 160 345M245 180L240 250 235 340 270 460 285 540M165 285L235 300 330 315 460 318M165 58L245 60 250 68 320 72 335 60V28M310 72L325 110 330 380 375 525M325 150H385M330 292L430 285 470 260 480 230 520 205 540 230 575 220 640 235M470 260L540 270 555 260M620 95L560 240 555 320 600 350 635 375 648 420M620 95L655 110 655 180 640 270 660 400 680 415M715 25L650 70 620 95 610 50 580 25M250 515L270 545 420 518 490 522 575 515 690 532M568 440L585 565 515 575 508 525M620 435L640 475 680 490 695 530M725 450L730 580 755 570M800 500L820 475M825 375L870 388 970 400 1045 425 1095 415 1150 372 1210 360 1260 330M850 200L890 240 893 380M890 240V220L850 215M1250 265L1262 330 1270 490 1232 498 1232 545 1240 575 1140 585 1065 595 1048 440M1145 585L1140 695 1153 700 1155 765 1168 770 1165 835 1140 845 1100 848M1290 25L1288 130 1340 220 1345 270M1490 25L1505 290 1530 340 1510 430 1490 500M1470 500L1465 580 1410 750M1510 280l20 -5M765 560L860 560M765 603L860 608M770 668L865 658M890 742L975 732 1000 755 895 772M775 808L890 797 850 820 845 850 852 930M890 815L850 825M775 943L905 925 1060 900 1087 985 940 1012M915 862L1045 838M780 1023L925 1003M945 1080L1120 1050M790 1170L945 1125M785 1130L840 1125 940 1095M790 1200L950 1165M800 1225L880 1205 905 1210 960 1198M800 1245L850 1235M805 1130L840 1240 880 1320M830 1130L860 1230M870 1290L965 1262M770 1095L755 1090 720 1065 690 1080 685 1130 675 1150 672 1185M780 1130l30 120",
  major:
    "M115 22L155 35 180 160 245 170 275 187 365 195 370 215 385 240 430 275 480 345 510 370 570 435 705 420 740 455 755 510 765 650 778 1100 800 1220 830 1290 880 1325M375 20L410 100 400 135 370 170 367 215M870 22L920 60 940 75 1000 140 1040 180 1120 215 1250 265 1350 280 1450 310 1530 352M915 20L875 80 850 190 848 260 825 375 820 470 860 500 853 560 885 790 940 1060 975 1290 965 1325M755 505L860 517 925 515 1050 455 1130 468 1325 462 1370 477 1480 497 1535 525",
  highway: "M990 12L1085 50 1150 92 1215 160 1300 270 1430 425 1540 500",
  ferry:
    "M5 370L20 435 50 475 110 535 250 635 295 690 320 740 338 830 355 1045 465 1325M12 390L25 438 112 532 255 638 300 695 325 745 343 830 360 1043 465 1325M780 1230H765L725 1320M775 1235L738 1320M1530 955L1400 1065 1290 1195 1195 1325",
  border: "M530 20L640 75 940 245 1510 1150 1540 1158",
};

function Layer({ sheets, part, ...rest }: { sheets: Sheet[]; part: keyof Sheet } & React.SVGProps<SVGPathElement>) {
  return (
    <>
      {sheets.map((s) => (s[part] ? <path key={s.at} transform={s.at} d={s[part]} {...rest} /> : null))}
    </>
  );
}

function Tile({ sheets, clip }: { sheets: Sheet[]; clip: string }) {
  return (
    <g clipPath={clip} strokeLinejoin="round" fill="none">
      <Layer sheets={sheets} part="woods" fill="#d6e8d0" />
      <Layer sheets={sheets} part="clearings" fill="#f1ebe9" />
      <Layer sheets={sheets} part="deepWoods" fill="#cbe5c4" />
      <Layer sheets={sheets} part="parks" fill="#b8ebad" />
      <Layer sheets={sheets} part="airport" fill="#dde2f7" />
      <Layer sheets={sheets} part="water" fill="#99ddff" />
      <Layer sheets={sheets} part="islands" fill="#f1ebe9" />
      <Layer sheets={sheets} part="streams" stroke="#99ddff" strokeWidth={7} />
      <Layer sheets={sheets} part="ferry" stroke="#80bffa" strokeWidth={3} />
      <Layer sheets={sheets} part="minor" stroke="#ffffff" strokeWidth={6} />
      <Layer sheets={sheets} part="major" stroke="#d1d6e3" strokeWidth={22} />
      <Layer sheets={sheets} part="major" stroke="#ffffff" strokeWidth={12} />
      <Layer sheets={sheets} part="highway" stroke="#f6f3f2" strokeWidth={25} />
      <Layer sheets={sheets} part="toll" stroke="#f6f3f2" strokeWidth={22} />
      <Layer sheets={sheets} part="toll" stroke="#f8e16c" strokeWidth={13} />
      <Layer sheets={sheets} part="highway" stroke="#ffb366" strokeWidth={15} />
      <Layer sheets={sheets} part="border" stroke="#ffffff" strokeOpacity={0.35} strokeWidth={24} />
      <Layer sheets={sheets} part="border" stroke="#7a78d1" strokeWidth={8} strokeDasharray="44 14 15 14" />
    </g>
  );
}

function CommunityMap() {
  return (
    <section aria-label="Map" className="min-h-0 min-w-0 overflow-hidden bg-[#f1ebe9]">
      <svg
        viewBox="0 155 1280 1285"
        preserveAspectRatio="xMinYMin slice"
        className="block h-full w-full"
        role="img"
        aria-label="Road map of Providence and Narragansett Bay"
      >
        <clipPath id="tile-north">
          <path d="M0 155H773V1008H0Z" />
        </clipPath>
        <clipPath id="tile-south">
          <path d="M773 1008H1280V1440H773Z" />
        </clipPath>
        <Tile sheets={[northWest, northEast, southWest, southEast]} clip="url(#tile-north)" />
        <Tile sheets={[southBay]} clip="url(#tile-south)" />
      </svg>
    </section>
  );
}

function CommandPanel() {
  const [command, setCommand] = useState("");
  return (
    <section className="flex min-w-0 flex-col bg-[#808182] text-[31px] leading-9 text-black">
      <div className="h-[880px] pt-[18px]">
        <div className="mx-auto w-[78%] border-2 border-black p-1">
          <p className="border-2 border-black bg-[#cdc0bb] px-4 py-4 font-bold">success</p>
        </div>
      </div>
      <hr className="border-t-2 border-b-2 border-t-[#28292c] border-b-[#d5d6d5]" />
      <form className="mt-4 flex flex-col items-center" onSubmit={(e) => e.preventDefault()}>
        <fieldset className="w-[calc(100%-8px)] border-2 border-t-[#6d6d6d] border-r-white border-b-white border-l-[#6d6d6d] px-20 pb-[22px] shadow-[inset_2px_2px_0_#fff,inset_-2px_-2px_0_#6d6d6d]">
          <legend className="mx-auto bg-[#808182] px-1">
            <label htmlFor="command">Enter a command:</label>
          </legend>
          <input
            id="command"
            type="text"
            value={command}
            onChange={(e) => setCommand(e.target.value)}
            placeholder="Enter command here!"
            className="mt-[9px] block h-10 w-full border-t-2 border-b border-t-[#767676] border-b-[#767676] bg-white px-1.5 text-[22px] outline-none placeholder:text-[#a9a9a9]"
          />
        </fieldset>
        <button
          type="submit"
          className="border-4 border-t-white border-r-[#6d6d6d] border-b-[#6d6d6d] border-l-white bg-[#2e2d2b] px-10 py-5 text-[#f4f4f4]"
        >
          Submit
        </button>
      </form>
    </section>
  );
}

export default function App() {
  return (
    <div className="flex h-screen flex-col font-['Inter',sans-serif]">
      <header className="flex shrink-0 items-center justify-center bg-[#282c34] pt-[42px] pb-[38px] text-white">
        <h1 className="text-[58px] leading-[75px] font-bold">Mesh Community Network</h1>
      </header>
      <main className="grid min-h-0 flex-1 grid-cols-2">
        <CommunityMap />
        <CommandPanel />
      </main>
    </div>
  );
}
